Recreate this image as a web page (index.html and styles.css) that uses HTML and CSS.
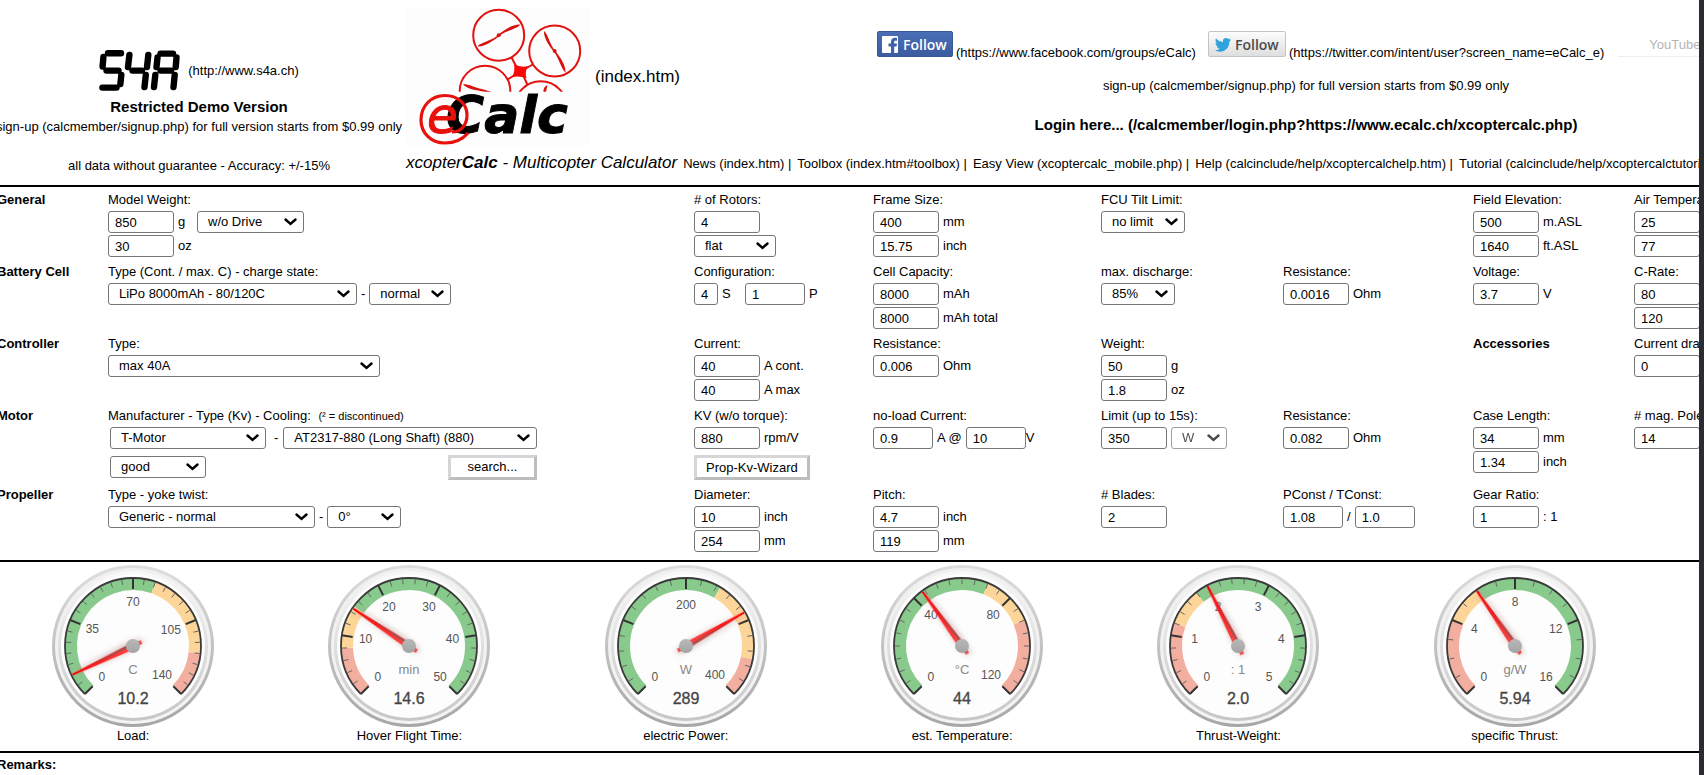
FILE: index.html
```html
<!DOCTYPE html>
<html lang="en">
<head>
<meta charset="utf-8">
<title>xcopterCalc - Multicopter Calculator</title>
<link rel="stylesheet" href="styles.css">
</head>
<body>
<div class="page">
<div class="sheet">

<header class="header">
  <div class="brand">
    <a class="s4a" href="#s4a">
      <svg width="81" height="41" viewBox="0 0 81 41" fill="none" stroke="#000" stroke-width="6.4" stroke-linecap="round" aria-label="S4A">
        <path d="M9 3.3H22M4.4 7L3.6 16.5M7.5 20.6H19.500M22.3 25L21.400 34M3.400 37.600H17.500"/>
        <path d="M30.400 5L29 17M33.500 20.600H43M49.300 5L48 17M46.800 25L45.500 37"/>
        <path d="M61.500 3.600H74M58.500 7.500L57.500 17M61.500 20.600H72M77.500 7.500L76.700 17M56.300 25L55 37M75.700 25L74.500 37"/>
      </svg>
      (http://www.s4a.ch)</a>
    <h1 class="demo">Restricted Demo Version</h1>
    <a href="#signup" class="signup">sign-up (calcmember/signup.php) for full version starts from $0.99 only</a>
    <p class="accuracy">all data without guarantee - Accuracy: +/-15%</p>
  </div>

  <a class="logo" href="#index">
    <svg width="184" height="138" viewBox="0 0 184 138" aria-label="eCalc">
      <rect width="184" height="138" fill="#fdfdfd"/>
      <defs><clipPath id="top"><rect width="184" height="83.700"/></clipPath></defs>
      <g clip-path="url(#top)" fill="none" stroke="#e3120f" stroke-width="2">
        <circle cx="92.700" cy="27.300" r="25.500"/><circle cx="148.700" cy="43" r="25.500"/>
        <circle cx="79" cy="83" r="25.300"/><circle cx="134.700" cy="99.300" r="26"/>
        <path d="M105.500 49.500L110 58M127.500 56L119 61M101.500 71.500L109 67M121.500 77L117.500 68"/>
        <g fill="#d8120f" stroke="none">
          <path d="M72 38.500C71.500 35.500 85 33.500 92 27C100 20.500 108 16 114 16.500C113.500 20 99 23 93.500 28C86 34 77 39 72 38.500Z"/>
          <path d="M138 23C141.500 25 143.500 36 149 42.500C154 49 160 57 159.500 64.500C155.500 61.500 152.500 49 148 44C143 37.500 137.500 30 138 23Z"/>
          <path d="M57 76C64 76 69 80 76 81L86 84H79C70 82 60 81 57 76ZM141.500 77C139 78 137 81 137.500 84H140Z"/>
          <circle cx="92.700" cy="27.300" r="2"/><circle cx="148.700" cy="43" r="2"/>
        </g>
        <path d="M108 56Q115 60 122 58Q118.500 64 120.500 70Q113 67.500 106 69Q109.500 63 108 56Z" fill="#fb0505" stroke="none"/>
      </g>
      <text x="40" y="124.500" class="logo-calc">Calc</text>
      <text x="21" y="124.500" class="logo-e">e</text>
      <path d="M62 125C56 132 48 135 39 135C25 135 15 125 15 112C15 98 25 87.500 39 87.500C52 87.500 61 96 61 107C61 117 55 124 46 124" fill="none" stroke="#e8100c" stroke-width="3.200"/>
    </svg>
    <span>(index.htm)</span></a>

  <div class="social">
    <div class="follow">
      <a href="#facebook">
        <svg width="76" height="26" viewBox="0 0 76 26" aria-hidden="true">
          <defs><linearGradient id="fb" x2="0" y2="1"><stop offset="0" stop-color="#4a6fb6"/><stop offset="1" stop-color="#3b5a9f"/></linearGradient></defs>
          <rect x=".500" y=".500" width="75" height="25" rx="1.500" fill="url(#fb)" stroke="#3b5998"/>
          <rect x="5" y="5" width="16" height="17" rx="1" fill="#fff"/>
          <path d="M14 22V15.500H11.500V12.500H14V10.800C14 8 15.700 6.800 18 6.800H20V9.800H18.700C17.500 9.800 17.200 10.300 17.200 11.200V12.500H20L19.600 15.500H17.200V22Z" fill="#4162a8"/>
          <text x="26" y="19" class="follow-text" fill="#fff">Follow</text>
        </svg>
        <span>(https://www.facebook.com/groups/eCalc)</span></a>
      <a href="#twitter">
        <svg width="78" height="26" viewBox="0 0 78 26" aria-hidden="true">
          <defs><linearGradient id="tw" x2="0" y2="1"><stop offset="0" stop-color="#fdfdfd"/><stop offset="1" stop-color="#dedede"/></linearGradient></defs>
          <rect x=".500" y=".500" width="77" height="25" rx="1.500" fill="url(#tw)" stroke="#c4c4c4"/>
          <path d="M23 8.500C22.400 8.800 21.800 9 21.100 9.100C21.800 8.700 22.300 8 22.600 7.300C21.900 7.700 21.200 8 20.400 8.100C18 5.700 14.300 7.600 15 10.900C12.200 10.800 9.700 9.500 8 7.500C7 9.200 7.500 11.300 9.100 12.400C8.500 12.400 8 12.200 7.500 12C7.500 13.700 8.700 15.100 10.300 15.500C9.800 15.600 9.300 15.600 8.800 15.500C9.200 16.800 10.400 17.700 11.900 17.800C10.500 18.900 8.800 19.400 7 19.200C13.500 23 21.400 19 21.400 10.800C22 10.300 22.600 9.500 23 8.500Z" fill="#2fa4dc"/>
          <text x="27" y="19" class="follow-text" fill="#4c4c4c">Follow</text>
        </svg>
        <span>(https://twitter.com/intent/user?screen_name=eCalc_e)</span></a>
      <a class="youtube" href="#youtube">YouTube</a>
    </div>
    <a class="signup-right" href="#signup">sign-up (calcmember/signup.php) for full version starts from $0.99 only</a>
    <a class="login" href="#login">Login here... (/calcmember/login.php?https://www.ecalc.ch/xcoptercalc.php)</a>
  </div>

  <nav class="nav">
    <h2 class="title">xcopter<b>Calc</b> - Multicopter Calculator</h2>
    <span><a href="#news">News (index.htm)</a> |</span>
    <span><a href="#toolbox">Toolbox (index.htm#toolbox)</a> |</span>
    <span><a href="#easy">Easy View (xcoptercalc_mobile.php)</a> |</span>
    <span><a href="#help">Help (calcinclude/help/xcoptercalchelp.htm)</a> |</span>
    <span><a href="#tutorial">Tutorial (calcinclude/help/xcoptercalctutorial.htm)</a> |</span>
  </nav>
</header>

<form class="form">
  <h3 class="c1">General</h3>
  <div class="c2"><label for="weight">Model Weight:</label>
    <div class="line"><input id="weight" value="850"><span class="unit-wide">g</span><select class="w107" aria-label="Weight includes"><option>w/o Drive</option></select></div>
    <div class="line"><input value="30" aria-label="Weight in oz"><span>oz</span></div></div>
  <div class="c3"><label for="rotors"># of Rotors:</label>
    <div class="line"><input id="rotors" value="4"></div>
    <div class="line"><select class="w82" aria-label="Rotor layout"><option>flat</option></select></div></div>
  <div class="c4"><label for="frame">Frame Size:</label>
    <div class="line"><input id="frame" value="400"><span>mm</span></div>
    <div class="line"><input value="15.75" aria-label="Frame size in inch"><span>inch</span></div></div>
  <div class="c5"><label for="tilt">FCU Tilt Limit:</label>
    <div class="line"><select id="tilt" class="w84"><option>no limit</option></select></div></div>
  <div class="c7"><label for="elev">Field Elevation:</label>
    <div class="line"><input id="elev" value="500"><span>m.ASL</span></div>
    <div class="line"><input value="1640" aria-label="Elevation in feet"><span>ft.ASL</span></div></div>
  <div class="c8"><label for="temp">Air Temperature:</label>
    <div class="line"><input id="temp" value="25"></div>
    <div class="line"><input value="77" aria-label="Temperature in °F"></div></div>

  <h3 class="c1">Battery Cell</h3>
  <div class="c2"><label for="cell">Type (Cont. / max. C) - charge state:</label>
    <div class="line"><select id="cell" class="w249"><option>LiPo 8000mAh - 80/120C</option></select><span>-</span><select class="w82" aria-label="Charge state"><option>normal</option></select></div></div>
  <div class="c3"><label for="series">Configuration:</label>
    <div class="line"><input id="series" class="w24" value="4"><span class="unit-series">S</span><input class="w60" value="1" aria-label="Parallel cells"><span>P</span></div></div>
  <div class="c4"><label for="cap">Cell Capacity:</label>
    <div class="line"><input id="cap" value="8000"><span>mAh</span></div>
    <div class="line"><input value="8000" aria-label="Total capacity"><span>mAh total</span></div></div>
  <div class="c5"><label for="discharge">max. discharge:</label>
    <div class="line"><select id="discharge" class="w74"><option>85%</option></select></div></div>
  <div class="c6"><label for="cellres">Resistance:</label>
    <div class="line"><input id="cellres" value="0.0016"><span>Ohm</span></div></div>
  <div class="c7"><label for="volt">Voltage:</label>
    <div class="line"><input id="volt" value="3.7"><span>V</span></div></div>
  <div class="c8"><label for="crate">C-Rate:</label>
    <div class="line"><input id="crate" value="80"></div>
    <div class="line"><input value="120" aria-label="Maximum C-rate"></div></div>

  <h3 class="c1">Controller</h3>
  <div class="c2"><label for="esc">Type:</label>
    <div class="line"><select id="esc" class="w272"><option>max 40A</option></select></div></div>
  <div class="c3"><label for="cur">Current:</label>
    <div class="line"><input id="cur" value="40"><span>A cont.</span></div>
    <div class="line"><input value="40" aria-label="Maximum current"><span>A max</span></div></div>
  <div class="c4"><label for="escres">Resistance:</label>
    <div class="line"><input id="escres" value="0.006"><span>Ohm</span></div></div>
  <div class="c5"><label for="escw">Weight:</label>
    <div class="line"><input id="escw" value="50"><span>g</span></div>
    <div class="line"><input value="1.8" aria-label="Controller weight in oz"><span>oz</span></div></div>
  <h3 class="c7">Accessories</h3>
  <div class="c8"><label for="drain">Current drain:</label>
    <div class="line"><input id="drain" value="0"></div></div>

  <h3 class="c1">Motor</h3>
  <div class="c2 motor"><label for="maker">Manufacturer - Type (Kv) - Cooling: <small>(² = discontinued)</small></label>
    <div class="motor-box">
      <div class="line"><select id="maker" class="w156"><option>T-Motor</option></select><span class="dash">-</span><select class="w254" aria-label="Motor type"><option>AT2317-880 (Long Shaft) (880)</option></select></div>
      <div class="line spread"><select class="w96" aria-label="Cooling"><option>good</option></select><button type="button" class="search">search...</button></div>
    </div></div>
  <div class="c3"><label for="kv">KV (w/o torque):</label>
    <div class="line"><input id="kv" value="880"><span>rpm/V</span></div>
    <button type="button" class="wizard">Prop-Kv-Wizard</button></div>
  <div class="c4"><label for="noload">no-load Current:</label>
    <div class="line"><input id="noload" class="w60" value="0.9"><span>A @</span><input class="w60" value="10" aria-label="No-load voltage"><span class="tight">V</span></div></div>
  <div class="c5"><label for="limit">Limit (up to 15s):</label>
    <div class="line"><input id="limit" value="350"><select class="w56" disabled aria-label="Limit unit"><option>W</option></select></div></div>
  <div class="c6"><label for="motres">Resistance:</label>
    <div class="line"><input id="motres" value="0.082"><span>Ohm</span></div></div>
  <div class="c7"><label for="case">Case Length:</label>
    <div class="line"><input id="case" value="34"><span>mm</span></div>
    <div class="line"><input value="1.34" aria-label="Case length in inch"><span>inch</span></div></div>
  <div class="c8"><label for="poles"># mag. Poles:</label>
    <div class="line"><input id="poles" value="14"></div></div>

  <h3 class="c1">Propeller</h3>
  <div class="c2"><label for="prop">Type - yoke twist:</label>
    <div class="line"><select id="prop" class="w207"><option>Generic - normal</option></select><span>-</span><select class="w74" aria-label="Yoke twist"><option>0°</option></select></div></div>
  <div class="c3"><label for="dia">Diameter:</label>
    <div class="line"><input id="dia" value="10"><span>inch</span></div>
    <div class="line"><input value="254" aria-label="Diameter in mm"><span>mm</span></div></div>
  <div class="c4"><label for="pitch">Pitch:</label>
    <div class="line"><input id="pitch" value="4.7"><span>inch</span></div>
    <div class="line"><input value="119" aria-label="Pitch in mm"><span>mm</span></div></div>
  <div class="c5"><label for="blades"># Blades:</label>
    <div class="line"><input id="blades" value="2"></div></div>
  <div class="c6"><label for="pconst">PConst / TConst:</label>
    <div class="line"><input id="pconst" class="w60" value="1.08"><span>/</span><input class="w60" value="1.0" aria-label="TConst"></div></div>
  <div class="c7"><label for="gear">Gear Ratio:</label>
    <div class="line"><input id="gear" value="1"><span>: 1</span></div></div>
</form>

<section class="gauges">
  <figure data-max="140" data-major="35" data-minor="5" data-bands="g80 y120 r140" data-value="10.2" data-unit="C"><figcaption>Load:</figcaption></figure>
  <figure data-max="50" data-major="10" data-minor="2" data-bands="r8 y15 g50" data-value="14.6" data-unit="min"><figcaption>Hover Flight Time:</figcaption></figure>
  <figure data-max="400" data-major="100" data-minor="20" data-bands="g245 y350 r400" data-value="289" data-unit="W" data-labels="0 200 400"><figcaption>electric Power:</figcaption></figure>
  <figure data-max="120" data-major="40" data-minor="5" data-bands="g70 y90 r120" data-value="44" data-unit="°C"><figcaption>est. Temperature:</figcaption></figure>
  <figure data-max="5" data-major="1" data-minor="0.2" data-bands="r1.2 y1.8 g5" data-value="2.0" data-unit=": 1"><figcaption>Thrust-Weight:</figcaption></figure>
  <figure data-max="16" data-major="4" data-minor="1" data-bands="r4 y6 g16" data-value="5.94" data-unit="g/W"><figcaption>specific Thrust:</figcaption></figure>
</section>

<section class="remarks"><h3>Remarks:</h3></section>

</div>
</div>
<script src="gauges.js"></script>
</body>
</html>
```

FILE: styles.css
```css
* { box-sizing: border-box; }

body {
  margin: 0;
  background: #2c2c2e;
  color: #000;
  font: 13px/18px "Liberation Sans", Arial, sans-serif;
}

h1, h2, h3, p, figure { margin: 0; }
h3 { font-size: 13px; }
a { color: inherit; text-decoration: none; white-space: nowrap; }

.page {
  margin-right: 5px;
  min-height: 100vh;
  background: #fff;
  overflow: hidden;
}
.sheet { margin-left: -3px; }

/* header */
.header {
  display: grid;
  grid-template-columns: minmax(0, 404fr) minmax(0, 476fr) minmax(0, 858fr);
  grid-template-rows: auto 1fr;
  margin-right: -36px;
  padding-bottom: 10px;
  border-bottom: 2px solid #000;
}
.brand {
  grid-row: 1 / 3;
  display: flex;
  flex-direction: column;
  align-items: center;
  padding-top: 50px;
}
.s4a { display: flex; align-items: center; gap: 8px; }
.demo { margin-top: 7px; font-size: 15px; line-height: 18px; }
.signup { margin-top: 2px; }
.accuracy { margin-top: 21px; }

.logo {
  display: flex;
  align-items: center;
  gap: 5px;
  padding: 8px 0 0 5px;
  font-size: 17px;
}
.logo-calc { font: italic bold 52px "DejaVu Sans", sans-serif; stroke: #000; }
.logo-e { font: italic 50px "DejaVu Sans", sans-serif; fill: #e8100c; stroke: #e8100c; }

.social {
  display: flex;
  flex-direction: column;
  align-items: center;
  padding-top: 31px;
}
.follow { display: flex; align-self: stretch; gap: 12px; }
.follow a { display: flex; align-items: baseline; gap: 3px; }
.follow-text { font: 600 14px "Open Sans", sans-serif; }
.follow .youtube {
  flex: 1;
  height: 26px;
  margin-left: 2px;
  padding: 5px 0 0 31px;
  border-bottom: 1px solid #eee;
  color: #b4b4b4;
}
.signup-right { margin-top: 15px; }
.login { margin-top: 21px; font-size: 15px; font-weight: bold; }

.nav {
  grid-column: 2 / 4;
  display: flex;
  align-items: baseline;
  gap: 6px;
  margin-top: 7px;
  padding-left: 5px;
  line-height: 20px;
  white-space: nowrap;
}
.title { font-size: 17px; font-style: italic; font-weight: normal; }

/* parameters */
.form {
  display: grid;
  grid-template-columns:
    minmax(0, 111fr) minmax(0, 586fr) minmax(0, 179fr) minmax(0, 228fr)
    minmax(0, 182fr) minmax(0, 190fr) minmax(0, 161fr) minmax(0, 65fr);
  row-gap: 6px;
  padding: 4px 0 8px;
  border-bottom: 2px solid #000;
}
.c1 { grid-column: 1; }
.c2 { grid-column: 2; }
.c3 { grid-column: 3; }
.c4 { grid-column: 4; }
.c5 { grid-column: 5; }
.c6 { grid-column: 6; }
.c7 { grid-column: 7; }
.c8 { grid-column: 8; }
.form label { display: block; margin-bottom: 2px; white-space: nowrap; }
.form small { margin-left: 4px; font-size: 11px; }

.line {
  display: flex;
  align-items: center;
  gap: 4px;
  height: 22px;
  white-space: nowrap;
}
.line + .line { margin-top: 2px; }

input, select, button { margin: 0; color: #000; font: inherit; }
input {
  flex: none;
  width: 66px;
  height: 22px;
  padding: 0 0 0 6px;
  border: 1px solid #777;
  border-radius: 3px;
  background: #fff;
}
select {
  flex: none;
  height: 22px;
  padding: 0 20px 0 10px;
  appearance: none;
  border: 1px solid #777;
  border-radius: 3px;
  background: #fff url("data:image/svg+xml,%3Csvg xmlns='http://www.w3.org/2000/svg' width='13' height='8'%3E%3Cpath d='M1.500 1.500L6.500 6L11.500 1.500' fill='none' stroke='%23000' stroke-width='2.400' stroke-linecap='round'/%3E%3C/svg%3E") no-repeat right 6px center;
}
select:disabled { opacity: .7; }

.w24 { width: 24px; }
.w60 { width: 60px; }
.w56 { width: 56px; }
.w74 { width: 74px; }
.w82 { width: 82px; }
.w84 { width: 84px; }
.w96 { width: 96px; }
.w107 { width: 107px; }
.w156 { width: 156px; }
.w207 { width: 207px; }
.w249 { width: 249px; }
.w254 { width: 254px; }
.w272 { width: 272px; }

.unit-wide { width: 15px; }
.unit-series { width: 19px; }
.dash { padding: 0 1px 0 4px; }
.tight { margin-left: -4px; }

.motor-box { width: 429px; padding-left: 2px; }
.spread { justify-content: space-between; }
.motor-box .line + .line { margin-top: 7px; }
button {
  height: 25px;
  padding: 0 9px;
  border: 3px solid;
  border-color: #d6d6d6 #bdbdbd #bdbdbd #d6d6d6;
  background: #fff;
  line-height: 18px;
}
.search { width: 89px; }
.wizard { margin-top: 6px; }

/* gauges */
.gauges {
  display: grid;
  grid-template-columns: repeat(6, 276fr) 46fr;
  margin-left: -2px;
  padding: 3px 0 6px;
  border-bottom: 2px solid #000;
  text-align: center;
}
.gauges svg { display: block; margin: 0 auto; }
.gauges text { text-anchor: middle; font-family: "Liberation Sans", Arial, sans-serif; }
.g-num { fill: #555; font-size: 12px; }
.g-unit { fill: #888; font-size: 13px; }
.g-value { fill: #444; font-size: 16px; stroke: #444; stroke-width: .3px; }

.remarks { padding-top: 3px; }
```

FILE: gauges.js
```js
const COLORS = { g: '#88c98c', y: '#fdd598', r: '#f2ae9f' };

const DEFS = `<defs>
  <linearGradient id="g1" x2="0" y2="1"><stop offset="0" stop-color="#dedede"/><stop offset="1" stop-color="#a6a6a6"/></linearGradient>
  <linearGradient id="g2" x2="0" y2="1"><stop offset="0" stop-color="#f0f0f0"/><stop offset="1" stop-color="#f4f4f4"/></linearGradient>
  <linearGradient id="g3" x2="0" y2="1"><stop offset="0" stop-color="#f8f8f8"/><stop offset="1" stop-color="#c6c6c6"/></linearGradient>
  <linearGradient id="n1" x2="0" y2="1"><stop offset="0" stop-color="#f00"/><stop offset="1" stop-color="#fb4a4a"/></linearGradient>
  <linearGradient id="n2" x2="0" y2="1"><stop offset="0" stop-color="#f00"/><stop offset="1" stop-color="#a85c5c"/></linearGradient>
  <linearGradient id="hub" x2="0" y2="1"><stop offset="0" stop-color="#b8b8b8"/><stop offset="1" stop-color="#a4a4a4"/></linearGradient>
  <filter id="glow" x="-400%" y="-40%" width="900%" height="180%"><feDropShadow dx="1" dy="1" stdDeviation="3" flood-color="#bc8f8f" flood-opacity=".7"/></filter>
</defs>`;

function polar(deg, r) {
  const a = deg * Math.PI / 180;
  return [(Math.sin(a) * r).toFixed(2), (-Math.cos(a) * r).toFixed(2)];
}

function arc(from, to, r) {
  const [x1, y1] = polar(from, r);
  const [x2, y2] = polar(to, r);
  return `M${x1} ${y1}A${r} ${r} 0 ${to - from > 180 ? 1 : 0} 1 ${x2} ${y2}`;
}

function tick(deg, r1, r2, color, width) {
  const [x1, y1] = polar(deg, r1);
  const [x2, y2] = polar(deg, r2);
  return `<path d="M${x1} ${y1}L${x2} ${y2}" stroke="${color}" stroke-width="${width}"/>`;
}

document.querySelectorAll('.gauges figure').forEach((figure, index) => {
  const d = figure.dataset;
  const max = +d.max, major = +d.major, minor = +d.minor;
  const angle = v => v / max * 270 - 135;
  let s = index === 0 ? DEFS : '';

  s += '<circle r="81" fill="url(#g1)"/><circle r="78" fill="url(#g2)"/><circle r="75" fill="url(#g3)"/><circle r="72" fill="#fdfdfd"/>';

  let start = 0;
  d.bands.split(' ').forEach(band => {
    const end = +band.slice(1);
    s += `<path d="${arc(angle(start), angle(end), 62)}" fill="none" stroke="${COLORS[band[0]]}" stroke-width="12"/>`;
    start = end;
  });

  const steps = Math.round(max / minor), every = Math.round(major / minor);
  for (let i = 0; i <= steps; i++) {
    s += i % every === 0
      ? tick(angle(i * minor), 68, 57, '#333', 2)
      : tick(angle(i * minor), 67, 62, '#666', 1);
  }
  s += `<path d="${arc(-135, 135, 68)}" fill="none" stroke="#3a3a3a" stroke-width="1.8"/>`;

  const shown = d.labels ? d.labels.split(' ') : null;
  for (let v = 0; v <= max; v += major) {
    if (shown && !shown.includes(String(v))) continue;
    const [x, y] = polar(angle(v), v >= 100 ? 41 : 44);
    s += `<text class="g-num" x="${x}" y="${+y + 4}">${v}</text>`;
  }

  s += `<text class="g-unit" y="28">${d.unit}</text><text class="g-value" y="58">${d.value}</text>`;
  s += `<g transform="rotate(${angle(+d.value)})"><g filter="url(#glow)">
    <path d="M0 -67L-1 -67L-3.500 0L0 0Z" fill="url(#n1)"/><path d="M0 -67L1 -67L3.500 0L0 0Z" fill="url(#n2)"/>
    <path d="M-2.500 0L-2 9.500H2L2.500 0Z" fill="#f05050"/></g></g>
    <circle r="7" fill="url(#hub)"/>`;

  figure.insertAdjacentHTML('afterbegin',
    `<svg width="162" height="162" viewBox="-81 -81 162 162" role="img" aria-label="${d.value} ${d.unit}">${s}</svg>`);
});
```
